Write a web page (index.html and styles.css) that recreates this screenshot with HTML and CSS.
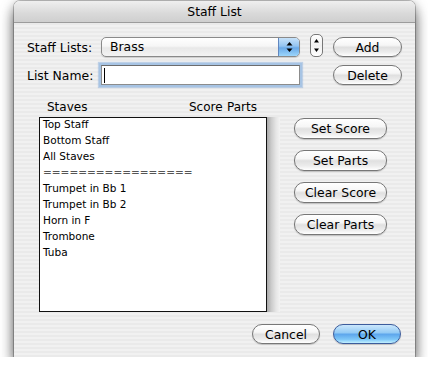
FILE: index.html
```html
<!DOCTYPE html>
<html lang="en">
<head>
    <meta charset="UTF-8">
    <meta name="viewport" content="width=device-width, initial-scale=1.0">
    <title>Staff List</title>
    <link rel="stylesheet" href="styles.css">
</head>
<body>

    <div class="window">
        <div class="titlebar">Staff List</div>

        <div class="content">
            <div class="form">
                <label class="lbl">Staff Lists:</label>
                <div class="popup">
                    <span class="popup-text">Brass</span>
                    <span class="popup-arrows">
                        <svg width="7" height="12" viewBox="0 0 7 12">
                            <path d="M3.5 1 L6.5 4.5 L0.5 4.5 Z" fill="#000"/>
                            <path d="M3.5 11 L6.5 7.5 L0.5 7.5 Z" fill="#000"/>
                        </svg>
                    </span>
                </div>
                <div class="stepper">
                    <svg width="7" height="19" viewBox="0 0 7 19">
                        <path d="M3.5 3 L6 6.5 L1 6.5 Z" fill="#000"/>
                        <path d="M3.5 16 L6 12.5 L1 12.5 Z" fill="#000"/>
                    </svg>
                </div>
                <button class="btn">Add</button>

                <label class="lbl">List Name:</label>
                <div class="field"><span class="caret"></span></div>
                <span></span>
                <button class="btn">Delete</button>
            </div>

            <div class="cols">
                <span class="col-staves">Staves</span>
                <span class="col-score">Score</span>
                <span class="col-parts">Parts</span>
            </div>

            <div class="main">
                <ul class="list">
                    <li>Top Staff</li>
                    <li>Bottom Staff</li>
                    <li>All Staves</li>
                    <li class="sep">=================</li>
                    <li>Trumpet in Bb 1</li>
                    <li>Trumpet in Bb 2</li>
                    <li>Horn in F</li>
                    <li>Trombone</li>
                    <li>Tuba</li>
                </ul>
                <div class="gutter"></div>
                <div class="side">
                    <button class="btn">Set Score</button>
                    <button class="btn">Set Parts</button>
                    <button class="btn">Clear Score</button>
                    <button class="btn">Clear Parts</button>
                </div>
            </div>

            <div class="footer">
                <button class="btn">Cancel</button>
                <button class="btn btn-default">OK</button>
            </div>
        </div>
    </div>

</body>
</html>
```

FILE: styles.css
```css
* {
    margin: 0;
    padding: 0;
    box-sizing: border-box;
}

body {
    background: #ffffff;
    font-family: "DejaVu Sans", sans-serif;
    font-size: 12.4px;
    color: #000;
}

.window {
    margin: 1px 0 0 14px;
    width: 401px;
    height: 356px;
    border-radius: 6px 6px 0 0;
    background: repeating-linear-gradient(#f1f1f1 0 2px, #eaeaea 2px 4px);
    box-shadow: 0 0 0 1px rgba(0, 0, 0, 0.22), 0 9px 14px rgba(0, 0, 0, 0.55), 0 2px 12px rgba(0, 0, 0, 0.28);
}

.titlebar {
    height: 22px;
    padding-top: 1px;
    line-height: 20px;
    text-align: center;
    border-radius: 6px 6px 0 0;
    border-bottom: 1px solid #9c9c9c;
    background: linear-gradient(#efefef, #d9d9d9 60%, #cfcfcf);
}

.content {
    padding: 14px 13px 13px 13px;
}

/* top form */
.form {
    display: grid;
    grid-template-columns: 64px 199px 13px 69px;
    grid-auto-rows: 20px;
    column-gap: 10px;
    row-gap: 8px;
    align-items: center;
}

.lbl {
    white-space: nowrap;
}

.popup {
    display: flex;
    height: 20px;
    border: 1px solid #8a8a8a;
    border-radius: 5px;
    background: linear-gradient(#ffffff, #f6f6f6 45%, #e8e8e8 55%, #f4f4f4);
    box-shadow: 0 1px 1px rgba(0, 0, 0, 0.15);
}

.popup-text {
    flex: 1;
    padding-left: 8px;
    line-height: 18px;
}

.popup-arrows {
    width: 21px;
    display: flex;
    align-items: center;
    justify-content: center;
    border-left: 1px solid #6186bf;
    border-radius: 0 4px 4px 0;
    background: linear-gradient(#c7e2fa, #93c4f1 45%, #6aa9e8 55%, #9cd6fb);
}

.stepper {
    width: 13px;
    height: 23px;
    display: flex;
    align-items: center;
    justify-content: center;
    border: 1px solid #777;
    border-radius: 5px;
    background: linear-gradient(#ffffff, #f0f0f0 50%, #ffffff);
    margin-top: -3px;
}

.field {
    height: 20px;
    border: 1px solid #8c8c8c;
    border-top-color: #6d6d6d;
    background: #fff;
    padding: 2px 0 0 2px;
    box-shadow: 0 0 0 2px #a7c4e4, 0 0 1px 3px rgba(130, 170, 220, 0.45);
}

.caret {
    display: block;
    width: 1px;
    height: 15px;
    background: #000;
}

/* buttons */
.btn {
    font-family: "DejaVu Sans", sans-serif;
    font-size: 12.4px;
    color: #000;
    height: 20px;
    border: 1px solid #777;
    border-radius: 10px;
    background: linear-gradient(#ffffff, #f6f6f6 40%, #e0e0e0 52%, #ececec 78%, #ffffff);
    box-shadow: 0 1px 1px rgba(0, 0, 0, 0.18);
    cursor: pointer;
}

.btn-default {
    border-color: #3c5c9c;
    background: linear-gradient(#cbe7fc, #94cbf5 42%, #5ea7ec 52%, #7ec7f8 80%, #c2f0ff);
}

/* column headers */
.cols {
    display: flex;
    height: 16px;
    margin-top: 14px;
    line-height: 16px;
    font-size: 12px;
    padding-left: 20px;
}

.col-staves {
    width: 142px;
}

.col-score {
    width: 38px;
}

/* list + side buttons */
.main {
    display: flex;
    margin-top: 2px;
    padding-left: 12px;
}

.list {
    list-style: none;
    width: 228px;
    height: 195px;
    border: 1px solid #111;
    background: #fff;
    padding: 0 0 0 3px;
    font-size: 10.5px;
    line-height: 16px;
}

.list li:first-child {
    margin-top: -2px;
}

.list .sep {
    color: #555;
}

.gutter {
    width: 13px;
    height: 195px;
    background: linear-gradient(to right, #a9a9a9, #cdcdcd 35%, #e6e6e6 70%, #f3f3f3);
}

.side {
    display: flex;
    flex-direction: column;
    gap: 11px;
    margin-left: 14px;
    padding-top: 1px;
}

.side .btn {
    width: 93px;
    height: 21px;
}

.footer {
    display: flex;
    justify-content: flex-end;
    gap: 13px;
    margin-top: 12px;
    padding-right: 1px;
}

.footer .btn {
    width: 68px;
}
```
